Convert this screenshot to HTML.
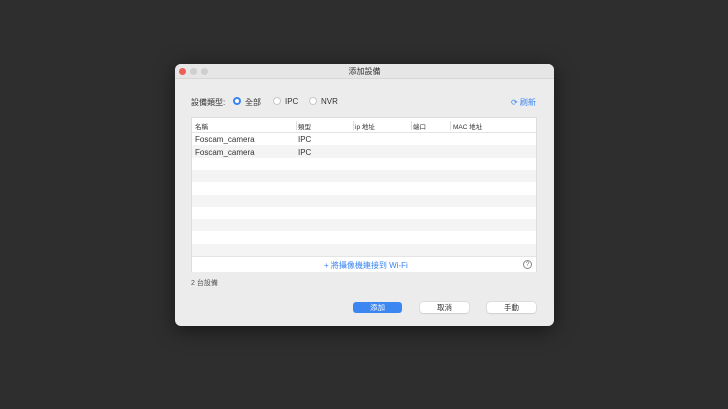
<!DOCTYPE html><html><head><meta charset="utf-8"><style>
*{margin:0;padding:0;box-sizing:border-box}
body{width:728px;height:409px;background:#2e2e2e;font-family:"Liberation Sans","Noto Sans CJK TC",sans-serif;position:relative;overflow:hidden;color:#333}
.win{position:absolute;left:175px;top:64px;width:379px;height:262px;background:#ececec;border-radius:6px;overflow:hidden;box-shadow:0 4px 20px rgba(0,0,0,.5)}
.tb{height:15px;background:#e6e6e6;border-bottom:1px solid #d6d6d6;text-align:center;font-size:8px;line-height:15px;color:#333}
.dot{position:absolute;top:4px;width:7px;height:7px;border-radius:50%;background:#cfcfcf}
.a{position:absolute;font-size:8px;white-space:nowrap}
.radio{position:absolute;width:8px;height:8px;border-radius:50%;border:1px solid #c8c8c8;background:#fff}
.tbl{position:absolute;left:16px;top:53px;width:346px;height:155px;background:#fff;border:1px solid #ddd}
.row{position:absolute;left:0;width:100%;height:12.3px}
.g{background:#f4f4f4}
.sep{position:absolute;top:3px;width:1px;height:9px;background:#ddd}
.btn{position:absolute;top:238px;width:49px;height:11px;border-radius:3px;background:#fff;font-size:7.5px;text-align:center;line-height:11px;box-shadow:0 0 0 .5px #ccc,0 1px 1px rgba(0,0,0,.1)}
</style></head><body>
<div class="win">
<div class="tb">添加設備</div>
<div class="dot" style="left:4px;background:#ec5f57"></div>
<div class="dot" style="left:15px"></div>
<div class="dot" style="left:26px"></div>
<div class="a" style="left:16px;top:33px">設備類型:</div>
<div class="radio" style="left:58px;top:33px;border:2.5px solid #3a84f0"></div>
<div class="a" style="left:70px;top:33px">全部</div>
<div class="radio" style="left:98px;top:33px"></div>
<div class="a" style="left:110px;top:33px">IPC</div>
<div class="radio" style="left:134px;top:33px"></div>
<div class="a" style="left:146px;top:33px">NVR</div>
<div class="a" style="left:336px;top:33px;color:#3a84f0">⟳ 刷新</div>
<div class="tbl">
<div class="row" style="top:0;height:15px;border-bottom:1px solid #e4e4e4"></div>
<div class="a" style="left:3px;top:3px;font-size:6.5px">名稱</div>
<div class="sep" style="left:104px"></div><div class="a" style="left:106px;top:3px;font-size:6.5px">類型</div>
<div class="sep" style="left:161px"></div><div class="a" style="left:163px;top:3px;font-size:6.5px">ip 地址</div>
<div class="sep" style="left:219px"></div><div class="a" style="left:221px;top:3px;font-size:6.5px">端口</div>
<div class="sep" style="left:258px"></div><div class="a" style="left:261px;top:3px;font-size:6.5px">MAC 地址</div>
<div class="row" style="top:15px"></div>
<div class="row g" style="top:27.3px"></div>
<div class="row g" style="top:51.9px"></div>
<div class="row g" style="top:76.5px"></div>
<div class="row g" style="top:101.1px"></div>
<div class="row g" style="top:125.7px"></div>
<div class="a" style="left:3px;top:17px">Foscam_camera</div><div class="a" style="left:106px;top:17px">IPC</div>
<div class="a" style="left:3px;top:29.5px">Foscam_camera</div><div class="a" style="left:106px;top:29.5px">IPC</div>
<div class="row" style="top:138px;height:16px;border-top:1px solid #e4e4e4;background:#fff"></div>
<div class="a" style="left:132px;top:142px;color:#3a84f0">+ 將攝像機連接到 Wi-Fi</div>
<div style="position:absolute;left:331px;top:142px;width:9px;height:9px;border:1px solid #888;border-radius:50%;font-size:6.5px;text-align:center;line-height:7px;color:#777">?</div>
</div>
<div class="a" style="left:16px;top:214px;font-size:7px;color:#555">2 台設備</div>
<div class="btn" style="left:178px;background:#3c86f2;color:#fff;box-shadow:none">添加</div>
<div class="btn" style="left:245px">取消</div>
<div class="btn" style="left:312px">手動</div>
</div>
</body></html>
